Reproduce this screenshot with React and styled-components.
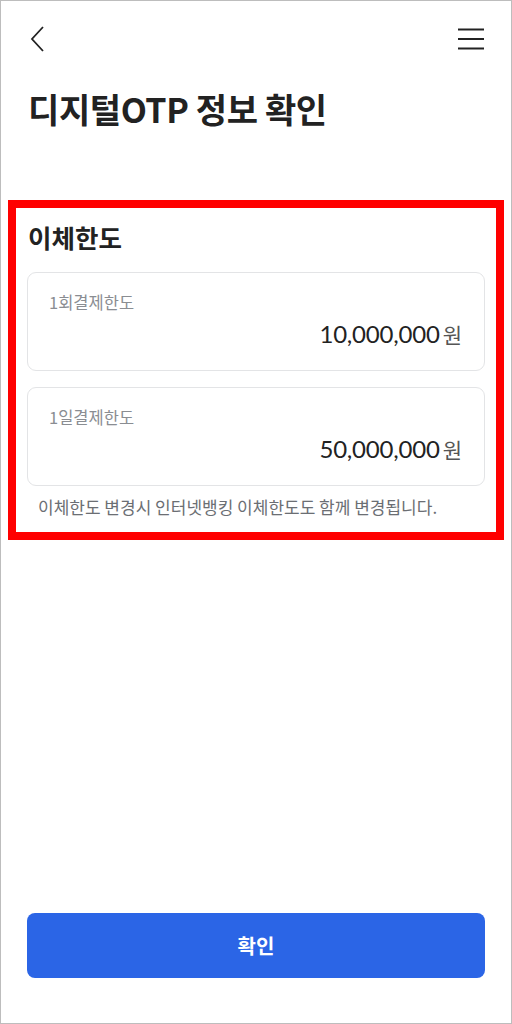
import styled, { createGlobalStyle } from "styled-components";

const GlobalStyle = createGlobalStyle`
  html, body {
    margin: 0;
    padding: 0;
    background: #ffffff;
  }
  body {
    font-family: "Noto Sans CJK KR", "Noto Sans", sans-serif;
    color: #222;
  }
`;

const Page = styled.div`
  box-sizing: border-box;
  width: 512px;
  height: 1024px;
  border: 1px solid #bdbdbd;
  display: flex;
  flex-direction: column;
  background: #fff;
`;

const TopBar = styled.div`
  height: 75px;
  display: flex;
  align-items: center;
  justify-content: space-between;
  padding: 0 27px 0 28px;
`;

const IconButton = styled.button`
  border: 0;
  background: transparent;
  padding: 0;
  display: flex;
  align-items: center;
  justify-content: center;
  cursor: pointer;
`;

const Title = styled.h1`
  margin: 11px 0 0 27px;
  font-size: 34px;
  line-height: 44px;
  font-weight: 700;
  letter-spacing: -0.4px;
  color: #222;
`;

const Section = styled.section`
  margin: 69px 7px 0;
  border: 8px solid #ff0000;
  padding: 13px 11px 14px;
  display: flex;
  flex-direction: column;
`;

const SectionTitle = styled.h2`
  margin: 0 0 19px 1px;
  font-size: 25.5px;
  line-height: 32px;
  font-weight: 700;
  color: #222;
`;

const CardList = styled.div`
  display: flex;
  flex-direction: column;
  gap: 16px;
`;

const Card = styled.div`
  box-sizing: border-box;
  height: 99px;
  border: 1px solid #e3e4e6;
  border-radius: 9px;
  padding: 17px 22px 0 21px;
  display: flex;
  flex-direction: column;
`;

const Label = styled.div`
  font-size: 16.5px;
  line-height: 24px;
  color: #8a8d92;
`;

const ValueRow = styled.div`
  margin-top: 4px;
  display: flex;
  justify-content: flex-end;
  align-items: baseline;
  gap: 3px;
`;

const Amount = styled.span`
  font-family: Lato, "Noto Sans", sans-serif;
  font-size: 24px;
  line-height: 32px;
  color: #222;
  letter-spacing: -0.2px;
`;

const Unit = styled.span`
  font-size: 21px;
  color: #555;
`;

const Note = styled.p`
  margin: 10px 0 0 11px;
  font-size: 17px;
  line-height: 22px;
  color: #6b6e73;
`;

const Spacer = styled.div`
  flex: 1;
`;

const ConfirmButton = styled.button`
  margin: 0 26px 45px;
  height: 65px;
  border: 0;
  border-radius: 8px;
  background: #2b65e6;
  color: #fff;
  font-family: "Noto Sans CJK KR", sans-serif;
  font-size: 20px;
  font-weight: 700;
  cursor: pointer;
`;

const limits = [
  { label: "1회결제한도", amount: "10,000,000" },
  { label: "1일결제한도", amount: "50,000,000" },
];

export default function App() {
  return (
    <>
      <GlobalStyle />
      <Page>
        <TopBar>
          <IconButton aria-label="뒤로">
            <svg width="16" height="28" viewBox="0 0 16 28" fill="none">
              <path d="M14 2 L3 14 L14 26" stroke="#222" strokeWidth="1.8" />
            </svg>
          </IconButton>
          <IconButton aria-label="메뉴">
            <svg width="26" height="24" viewBox="0 0 26 24" fill="none">
              <path d="M0 2.5 H26 M0 12 H26 M0 21.5 H26" stroke="#222" strokeWidth="2" />
            </svg>
          </IconButton>
        </TopBar>
        <Title>디지털OTP 정보 확인</Title>
        <Section>
          <SectionTitle>이체한도</SectionTitle>
          <CardList>
            {limits.map((item) => (
              <Card key={item.label}>
                <Label>{item.label}</Label>
                <ValueRow>
                  <Amount>{item.amount}</Amount>
                  <Unit>원</Unit>
                </ValueRow>
              </Card>
            ))}
          </CardList>
          <Note>이체한도 변경시 인터넷뱅킹 이체한도도 함께 변경됩니다.</Note>
        </Section>
        <Spacer />
        <ConfirmButton>확인</ConfirmButton>
      </Page>
    </>
  );
}
